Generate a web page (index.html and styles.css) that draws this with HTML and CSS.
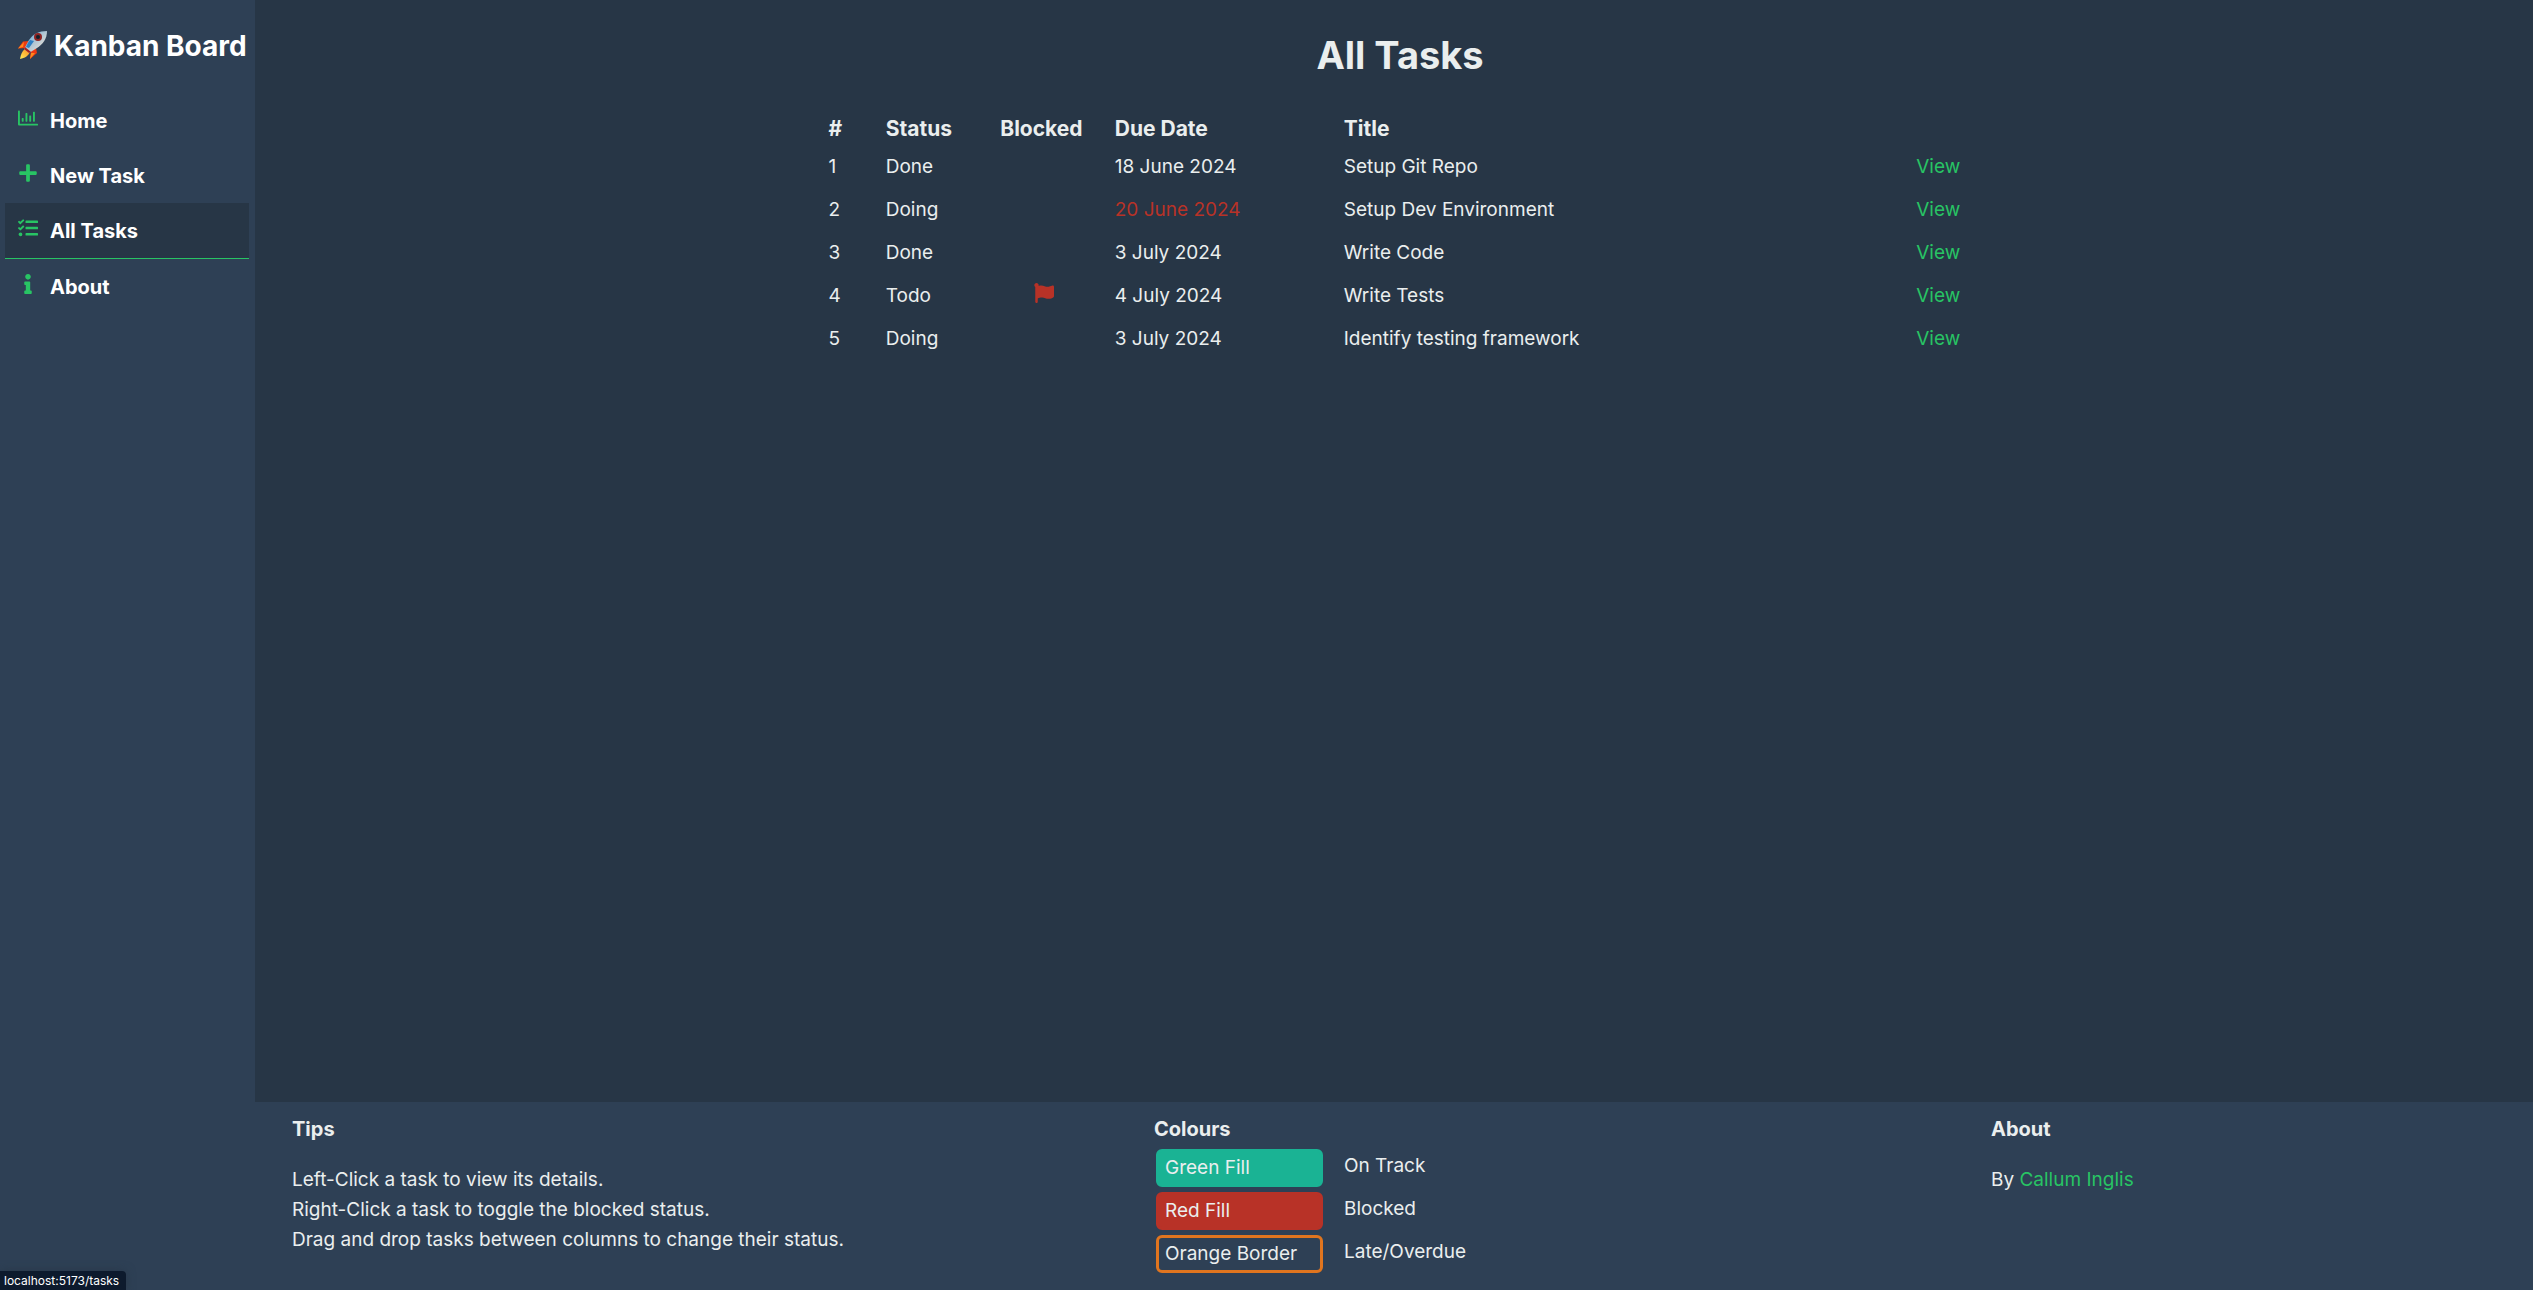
FILE: index.html
```html
<!DOCTYPE html>
<html lang="en">
<head>
<meta charset="utf-8">
<title>Kanban Board</title>
<link rel="stylesheet" href="styles.css">
</head>
<body>
<div class="app">
  <aside class="sidebar">
    <div class="brand">
      <svg class="rocket" viewBox="0 0 29 29" aria-hidden="true">
        <defs>
          <linearGradient id="hull" x1="0" y1="0" x2="1" y2="1">
            <stop offset="0" stop-color="#3f97d8"/>
            <stop offset=".45" stop-color="#a9c3d4"/>
            <stop offset=".7" stop-color="#d3d6d5"/>
            <stop offset="1" stop-color="#55707f"/>
          </linearGradient>
          <linearGradient id="flame" x1="1" y1="0" x2="0" y2="1">
            <stop offset="0" stop-color="#ff8a1c"/>
            <stop offset="1" stop-color="#ffee58"/>
          </linearGradient>
        </defs>
        <path fill="#ee3a12" d="M11 10 5 10.500 0 17.500 8 17zM18 17l1 5-7 6 1-8z"/>
        <path fill="#ff8a1c" d="M6 11 0 17.500 5 16zM17 22l-5 6 1-6z"/>
        <path fill="url(#flame)" d="M7 18c-3 2-4 5-5 10 5-1 8-3 10-7z"/>
        <path fill="url(#hull)" d="M29 0C21 0 15 3 11 9L6 18l5 4 8-5c6-4 10-9 10-17z"/>
        <path fill="#a81f18" d="m7 16 6 5-2 1-5-4z"/>
        <path fill="#2e7fc4" d="M12 9c-2 2-3 5-4 7l3 1 5-7z"/>
        <circle cx="20" cy="6" r="4" fill="#8e2424"/>
        <circle cx="20" cy="6" r="2" fill="#11202b"/>
      </svg>
      <span>Kanban Board</span>
    </div>
    <nav class="nav">
      <a class="nav-link" href="#home">
        <svg class="icon" viewBox="0 0 512 512" aria-hidden="true"><path d="M396.8 352h22.4c6.4 0 12.8-6.4 12.8-12.8V108.8c0-6.4-6.4-12.8-12.8-12.8h-22.4c-6.4 0-12.8 6.4-12.8 12.8v230.4c0 6.4 6.4 12.8 12.8 12.8zm-192 0h22.4c6.4 0 12.8-6.4 12.8-12.8V140.8c0-6.4-6.4-12.8-12.8-12.8h-22.4c-6.4 0-12.8 6.4-12.8 12.8v198.4c0 6.4 6.4 12.8 12.8 12.8zm96 0h22.4c6.4 0 12.8-6.4 12.8-12.8V204.8c0-6.4-6.4-12.8-12.8-12.8h-22.4c-6.4 0-12.8 6.4-12.8 12.8v134.4c0 6.4 6.4 12.8 12.8 12.8zM496 400H48V80c0-8.840-7.160-16-16-16H16C7.160 64 0 71.160 0 80v336c0 17.670 14.330 32 32 32h464c8.840 0 16-7.160 16-16v-16c0-8.840-7.160-16-16-16zm-387.200-48h22.400c6.400 0 12.800-6.400 12.800-12.800v-70.400c0-6.400-6.400-12.800-12.800-12.800h-22.400c-6.400 0-12.800 6.400-12.800 12.800v70.400c0 6.400 6.400 12.800 12.800 12.800z"/></svg>
        <span>Home</span>
      </a>
      <a class="nav-link" href="#new">
        <svg class="icon" viewBox="0 0 448 512" aria-hidden="true"><path d="M416 208H272V64c0-17.670-14.330-32-32-32h-32c-17.670 0-32 14.330-32 32v144H32c-17.670 0-32 14.330-32 32v32c0 17.670 14.330 32 32 32h144v144c0 17.670 14.330 32 32 32h32c17.670 0 32-14.330 32-32V304h144c17.670 0 32-14.330 32-32v-32c0-17.670-14.330-32-32-32z"/></svg>
        <span>New Task</span>
      </a>
      <a class="nav-link active" href="#tasks" aria-current="page">
        <svg class="icon" viewBox="0 0 512 512" aria-hidden="true"><path d="M139.610 35.500a12 12 0 0 0-17 0L58.930 98.810l-22.700-22.120a12 12 0 0 0-17 0L3.530 92.410a12 12 0 0 0 0 17l47.590 47.400a12.780 12.780 0 0 0 17.610 0l15.590-15.620L156.520 69a12.090 12.090 0 0 0 .09-17zm0 159.190a12 12 0 0 0-17 0l-63.680 63.720-22.700-22.100a12 12 0 0 0-17 0L3.530 252a12 12 0 0 0 0 17L51 316.500a12.770 12.770 0 0 0 17.600 0l15.700-15.690 72.200-72.220a12 12 0 0 0 .09-16.900zM64 368c-26.490 0-48.590 21.500-48.590 48S37.530 464 64 464a48 48 0 0 0 0-96zm432 16H208a16 16 0 0 0-16 16v32a16 16 0 0 0 16 16h288a16 16 0 0 0 16-16v-32a16 16 0 0 0-16-16zm0-320H208a16 16 0 0 0-16 16v32a16 16 0 0 0 16 16h288a16 16 0 0 0 16-16V80a16 16 0 0 0-16-16zm0 160H208a16 16 0 0 0-16 16v32a16 16 0 0 0 16 16h288a16 16 0 0 0 16-16v-32a16 16 0 0 0-16-16z"/></svg>
        <span>All Tasks</span>
      </a>
      <a class="nav-link" href="#about">
        <svg class="icon" viewBox="0 0 192 512" aria-hidden="true"><path d="M20 424.229h20V279.771H20c-11.046 0-20-8.954-20-20V212c0-11.046 8.954-20 20-20h112c11.046 0 20 8.954 20 20v212.229h20c11.046 0 20 8.954 20 20V492c0 11.046-8.954 20-20 20H20c-11.046 0-20-8.954-20-20v-47.771c0-11.046 8.954-20 20-20zM96 0C56.235 0 24 32.235 24 72s32.235 72 72 72 72-32.235 72-72S135.764 0 96 0z"/></svg>
        <span>About</span>
      </a>
    </nav>
  </aside>
  <div class="content">
    <main class="main">
      <h1 class="page-title">All Tasks</h1>
      <table class="tasks">
        <colgroup>
          <col class="col-number"><col class="col-status"><col class="col-blocked"><col class="col-due"><col class="col-title"><col class="col-view">
        </colgroup>
        <thead>
          <tr><th>#</th><th>Status</th><th>Blocked</th><th>Due Date</th><th>Title</th><td></td></tr>
        </thead>
        <tbody>
          <tr><td>1</td><td>Done</td><td></td><td>18 June 2024</td><td>Setup Git Repo</td><td><a href="#task-1">View</a></td></tr>
          <tr><td>2</td><td>Doing</td><td></td><td class="overdue">20 June 2024</td><td>Setup Dev Environment</td><td><a href="#task-2">View</a></td></tr>
          <tr><td>3</td><td>Done</td><td></td><td>3 July 2024</td><td>Write Code</td><td><a href="#task-3">View</a></td></tr>
          <tr><td>4</td><td>Todo</td><td class="flag-cell"><svg class="icon flag" viewBox="0 0 512 512" role="img" aria-label="Blocked"><path d="M349.565 98.783C295.978 98.783 251.721 64 184.348 64c-24.955 0-47.309 4.384-68.045 12.013a55.947 55.947 0 0 0 3.586-23.562C118.117 24.015 94.806 1.206 66.338.048 34.345-1.254 8 24.296 8 56c0 19.026 9.497 35.825 24 45.945V488c0 13.255 10.745 24 24 24h16c13.255 0 24-10.745 24-24v-94.400c28.311-12.064 63.582-22.122 114.435-22.122 53.588 0 97.844 34.783 165.217 34.783 48.169 0 86.667-16.294 122.505-40.858C506.840 359.452 512 349.571 512 339.045v-243.100c0-23.393-24.269-38.870-45.485-29.016-34.338 15.948-76.454 31.854-116.950 31.854z"/></svg></td><td>4 July 2024</td><td>Write Tests</td><td><a href="#task-4">View</a></td></tr>
          <tr><td>5</td><td>Doing</td><td></td><td>3 July 2024</td><td>Identify testing framework</td><td><a href="#task-5">View</a></td></tr>
        </tbody>
      </table>
    </main>
    <footer class="footer">
      <section>
        <h2 class="footer-title">Tips</h2>
        <p class="footer-text">Left-Click a task to view its details.<br>Right-Click a task to toggle the blocked status.<br>Drag and drop tasks between columns to change their status.</p>
      </section>
      <section>
        <h2 class="footer-title">Colours</h2>
        <dl class="legend">
          <dt class="swatch swatch-green">Green Fill</dt><dd>On Track</dd>
          <dt class="swatch swatch-red">Red Fill</dt><dd>Blocked</dd>
          <dt class="swatch swatch-orange">Orange Border</dt><dd>Late/Overdue</dd>
        </dl>
      </section>
      <section>
        <h2 class="footer-title">About</h2>
        <p class="footer-text">By <a href="#author">Callum Inglis</a></p>
      </section>
    </footer>
  </div>
</div>
<div class="status-bar">localhost:5173/tasks</div>
</body>
</html>
```
FILE: styles.css
```css
* {
  box-sizing: border-box;
}

body {
  margin: 0;
  background: #273646;
  color: #eaeeee;
  font-family: Inter, "Liberation Sans", sans-serif;
  font-size: 19px;
  line-height: 30px;
}

a {
  color: #28c464;
  text-decoration: none;
}

.app {
  display: flex;
  min-height: 100vh;
}

.sidebar {
  flex: none;
  width: 255px;
  padding: 0 6px 0 5px;
  background: #2e4055;
  color: #fff;
}

.brand {
  display: flex;
  align-items: center;
  gap: 7px;
  height: 91px;
  margin-bottom: 2px;
  padding-left: 13px;
  font-size: 28px;
  font-weight: 700;
  white-space: nowrap;
}

.rocket {
  flex: none;
  width: 29px;
  height: 29px;
}

.nav-link {
  display: flex;
  align-items: center;
  gap: 12px;
  height: 55px;
  padding: 0 13px;
  color: #fff;
  font-size: 20px;
  font-weight: 700;
}

.nav-link.active {
  height: 56px;
  border-bottom: 1px solid #28c464;
  background: #273646;
}

.icon {
  width: 20px;
  height: 20px;
  margin-bottom: 6px;
  fill: #28c464;
}

.content {
  display: flex;
  flex: 1;
  flex-direction: column;
}

.main {
  flex: 1;
  padding-left: 4px;
}

.page-title {
  margin: 0;
  padding: 31px 0 33px 8px;
  font-size: 38px;
  font-weight: 700;
  line-height: 48px;
  text-align: center;
}

.tasks {
  width: calc(50% + 8px);
  margin: 0 auto;
  border-collapse: collapse;
  table-layout: fixed;
}

.tasks th,
.tasks td {
  height: 43px;
  padding: 0 5px;
  text-align: left;
}

.tasks thead th,
.tasks thead td {
  height: 33px;
  font-size: 21px;
}

.col-number,
.col-view {
  width: 5%;
}

.col-status,
.col-blocked {
  width: 10%;
}

.col-due {
  width: 20%;
}

.col-title {
  width: 50%;
}

.tasks .overdue {
  color: #b83227;
}

.tasks .flag-cell {
  padding-left: 39px;
}

.flag {
  display: block;
  fill: #b83227;
}

.footer {
  display: grid;
  grid-template-columns: 862fr 837fr 542fr;
  min-height: 188px;
  padding: 12px 0 12px 37px;
  background: #2e4055;
}

.footer-title {
  margin: 0;
  font-size: 20px;
  font-weight: 700;
}

.footer-text {
  margin: 21px 0 0;
}

.legend {
  display: grid;
  grid-template-columns: 167px auto;
  gap: 5px 21px;
  margin: 5px 0 0;
  padding-left: 2px;
}

.legend dd {
  margin: 0;
  padding-top: 2px;
}

.swatch {
  height: 38px;
  padding: 1px 6px;
  border: 3px solid;
  border-radius: 6px;
}

.swatch-green {
  border-color: #1ab394;
  background: #1ab394;
}

.swatch-red {
  border-color: #b83227;
  background: #b83227;
}

.swatch-orange {
  border-color: #e0751f;
}

.status-bar {
  position: absolute;
  bottom: 0;
  left: 0;
  padding: 0 7px 0 4px;
  border-top-right-radius: 4px;
  background: #0d1a2d;
  box-shadow: 0 0 10px rgba(39, 54, 70, 0.8);
  color: #fff;
  font-size: 12px;
  line-height: 19px;
}
```
